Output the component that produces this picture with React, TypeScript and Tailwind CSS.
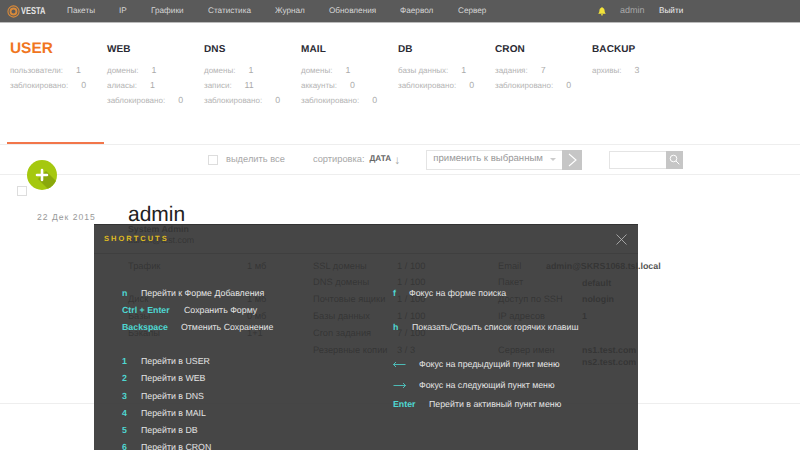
import React from "react";

const nav: [string, string][] = [
  ["Пакеты", "w-[52px]"],
  ["IP", "w-[32px]"],
  ["Графики", "w-[57px]"],
  ["Статистика", "w-[67px]"],
  ["Журнал", "w-[54px]"],
  ["Обновления", "w-[71px]"],
  ["Фаервол", "w-[58px]"],
  ["Сервер", "w-[50px]"],
];

const stats: { title: string; big?: boolean; rows: [string, string][] }[] = [
  { title: "USER", big: true, rows: [["пользователи:", "1"], ["заблокировано:", "0"]] },
  { title: "WEB", rows: [["домены:", "1"], ["алиасы:", "1"], ["заблокировано:", "0"]] },
  { title: "DNS", rows: [["домены:", "1"], ["записи:", "11"], ["заблокировано:", "0"]] },
  { title: "MAIL", rows: [["домены:", "1"], ["аккаунты:", "0"], ["заблокировано:", "0"]] },
  { title: "DB", rows: [["базы данных:", "1"], ["заблокировано:", "0"]] },
  { title: "CRON", rows: [["задания:", "7"], ["заблокировано:", "0"]] },
  { title: "BACKUP", rows: [["архивы:", "3"]] },
];

const under: string[][] = [
  ["Трафик", "1 мб", "SSL домены", "1 / 100", "Email", "admin@SKRS1068.tsl.local"],
  ["", "", "DNS домены", "1 / 100", "Пакет", "default"],
  ["Диск", "1 мб", "Почтовые ящики", "1 / 100", "Доступ по SSH", "nologin"],
  ["Базы", "0 мб", "Базы данных", "1 / 100", "IP адресов", "1"],
  ["Бэкапы", "1+1", "Cron задания", "7 / 100", "", ""],
  ["", "", "Резервные копии", "3 / 3", "Сервер имен", "ns1.test.com"],
];

function Key({ k, text, gap, mb = "mb-[4.2px]" }: { k: string; text: string; gap: string; mb?: string }) {
  return (
    <div className={`flex h-[13px] items-center whitespace-nowrap ${mb}`}>
      <span className={`font-bold text-[#4fd8d2] ${gap}`}>{k}</span>
      <span className="text-[#e4e4e4]">{text}</span>
    </div>
  );
}

function Arrow({ left }: { left?: boolean }) {
  return (
    <svg width="13" height="7" viewBox="0 0 13 7" fill="none" stroke="#4fd8d2" strokeWidth="0.8" className="mr-[13px]">
      {left ? <path d="M12.5 3.5H.5M3 1 .5 3.5 3 6" /> : <path d="M.5 3.5h12M10 1l2.5 2.5L10 6" />}
    </svg>
  );
}

export default function App() {
  return (
    <div className="relative h-[450px] w-[800px] overflow-hidden bg-white font-['Liberation_Sans',Arial,sans-serif] text-[8.8px] [text-rendering:geometricPrecision]">
      <header className="flex h-[22px] items-center bg-[#5a5a5a] text-[8.2px] text-[#d6d6d6] shadow-[0_1px_0_#bbb]">
        <svg width="13" height="13" viewBox="0 0 14 14" className="ml-[7px]" fill="none" stroke="#d98a3a">
          <circle cx="7" cy="7" r="6" strokeWidth="1.200" />
          <circle cx="7" cy="7" r="3.200" strokeWidth="2" />
        </svg>
        <span className="ml-[1px] w-[46px] origin-left scale-x-[0.75] text-[10px] font-bold text-[#e6e6e6]">VESTA</span>
        {nav.map(([n, w]) => (
          <span key={n} className={w}>{n}</span>
        ))}
        <svg width="8" height="9" viewBox="0 0 8 9" className="ml-[90px]" fill="#f3e33a">
          <path d="M4 0c.4 0 .6.3.6.7C6 1 6.600 2.200 6.600 3.600c0 1.600.4 2.300 1.200 3.100H.2C1 5.900 1.400 5.200 1.400 3.600 1.400 2.200 2 1 3.400.7 3.400.3 3.600 0 4 0ZM3 7.300h2C5 8.100 4.600 8.600 4 8.600S3 8.100 3 7.300Z" />
        </svg>
        <span className="ml-[14px] w-[39px] text-[9px] text-[#a8a8a8]">admin</span>
        <span className="text-[#f0f0f0]">Выйти</span>
      </header>

      <section className="flex h-[121px] pl-[10px] pt-[20px]">
        {stats.map((s) => (
          <div key={s.title} className="w-[97px] shrink-0">
            <div className={`flex h-[14px] items-center font-bold ${s.big ? "text-[15.400px] text-[#f0761f]" : "text-[10px] tracking-[0.1px] text-[#2a2a33]"}`}>
              {s.title}
            </div>
            <div className="mt-[9px] flex flex-col gap-[4px] text-[8px] text-[#b4b4b4]">
              {s.rows.map(([l, v]) => (
                <div key={l} className="flex h-[11px] items-center whitespace-nowrap">
                  <span>{l}</span>
                  <span className="ml-[13px] text-[8.800px] text-[#aaa]">{v}</span>
                </div>
              ))}
            </div>
          </div>
        ))}
      </section>

      <div className="flex h-[2px] items-end border-b border-[#eee] pl-[7px]">
        <div className="h-[2px] w-[97px] bg-[#f2764a]" />
      </div>

      <div className="flex h-[30px] items-center border-b border-[#eee] text-[#a8a8a8]">
        <span className="ml-[208px] size-[10px] border border-[#ddd]" />
        <span className="ml-[8px] text-[9.300px]">выделить все</span>
        <span className="ml-[28px] text-[9.300px]">сортировка:</span>
        <span className="ml-[5px] text-[8.200px] font-bold text-[#666]">ДАТА</span>
        <span className="ml-[3px] text-[12px]">↓</span>
        <div className="ml-[26px] flex h-[20px] w-[156px]">
          <div className="flex flex-1 items-center justify-between whitespace-nowrap border border-r-0 border-[#e4e4e4] px-[6px] text-[9.600px] text-[#999]">
            <span>применить к выбранным</span>
            <span className="h-0 w-0 border-x-[3px] border-t-[3px] border-x-transparent border-t-[#ccc]" />
          </div>
          <div className="flex w-[20px] items-center justify-center bg-[#c6c6c6]">
            <svg width="9" height="14" viewBox="0 0 9 14" fill="none" stroke="#fff" strokeWidth="1.100"><path d="m1 1 7 6-7 6" /></svg>
          </div>
        </div>
        <div className="ml-[27px] flex h-[18px] w-[74px]">
          <div className="flex-1 border border-r-0 border-[#e4e4e4]" />
          <div className="flex w-[17px] items-center justify-center bg-[#c6c6c6]">
            <svg width="11" height="11" viewBox="0 0 11 11" fill="none" stroke="#fff" strokeWidth="1"><circle cx="4.500" cy="4.500" r="3.300" /><path d="m7 7 3.300 3.300" /></svg>
          </div>
        </div>
      </div>

      <div className="relative flex h-[229px] border-b border-[#eee] text-[#555]">
        <div className="ml-[17px] mt-[11px] size-[10px] border border-[#ddd]" />
        <div className="ml-[10px] mt-[36px] w-[74px] whitespace-nowrap text-[8.600px] tracking-[1px] text-[#999]">22 Дек 2015</div>
        <div className="ml-[17px] mt-[28px] flex-1 whitespace-nowrap">
          <div className="text-[21px] leading-[24px] text-[#222]">admin</div>
          <div className="-mt-[4px] h-[11px] font-bold">System Admin</div>
          <div className="h-[11px]">admin@test.com</div>
          <div className="mt-[16px] flex flex-col gap-[5.800px] text-[9.300px]">
            {under.map((r, i) => (
              <div key={i} className="flex h-[11px] items-center">
                <span className="w-[119px]">{r[0]}</span>
                <span className="w-[66px]">{r[1]}</span>
                <span className="w-[84px]">{r[2]}</span>
                <span className="w-[101px]">{r[3]}</span>
                <span className={i === 0 ? "w-[48px]" : "w-[84px]"}>{r[4]}</span>
                <span className="text-[8.900px] font-bold text-[#555]">{r[5]}</span>
              </div>
            ))}
            <div className="-mt-[5.800px] h-[11px] pl-[454px] text-[8.900px] font-bold text-[#555]">ns2.test.com</div>
          </div>
        </div>
      </div>

      <div className="absolute left-[27px] top-[160px] flex size-[30px] items-center justify-center overflow-hidden rounded-full bg-[#a5c80f]">
        <svg width="30" height="30" viewBox="0 0 30 30" className="absolute inset-0">
          <path d="M19 11 30 22l-8 8-11-11Z" fill="#8aa80c" />
          <path d="M15 10v10M10 15h10" stroke="#fff" strokeWidth="2.600" strokeLinecap="round" />
        </svg>
      </div>

      <div className="absolute left-[94px] top-[224px] h-[226px] w-[544px] border-t border-[#333] bg-[#323232]/90">
        <div className="flex h-[29px] items-center justify-between border-b border-[#3f3f3f] pl-[10px] pr-[11px]">
          <span className="text-[7.500px] font-bold tracking-[2px] text-[#e0bd21]">SHORTCUTS</span>
          <svg width="11" height="11" viewBox="0 0 11 11" stroke="#bbb" strokeWidth="0.800"><path d="m.5.5 10 10M10.500.5l-10 10" /></svg>
        </div>
        <div className="flex pl-[28px] pt-[33px]">
          <div className="w-[271px]">
            <Key k="n" text="Перейти к Форме Добавления" gap="w-[19px]" />
            <Key k="Ctrl + Enter" text="Сохранить Форму" gap="w-[62px]" />
            <Key k="Backspace" text="Отменить Сохранение" gap="w-[59px]" mb="mb-[21px]" />
            {["USER", "WEB", "DNS", "MAIL", "DB", "CRON"].map((x, i) => (
              <Key key={x} k={String(i + 1)} text={`Перейти в ${x}`} gap="w-[19px]" />
            ))}
          </div>
          <div>
            <Key k="f" text="Фокус на форме поиска" gap="w-[16px]" mb="mb-[21px]" />
            <Key k="h" text="Показать/Скрыть список горячих клавиш" gap="w-[19px]" mb="mb-[24px]" />
            <div className="mb-[8px] flex h-[13px] items-center whitespace-nowrap text-[#e4e4e4]"><Arrow left /><span>Фокус на предыдущий пункт меню</span></div>
            <div className="mb-[6px] flex h-[13px] items-center whitespace-nowrap text-[#e4e4e4]"><Arrow /><span>Фокус на следующий пункт меню</span></div>
            <Key k="Enter" text="Перейти в активный пункт меню" gap="w-[36px]" />
          </div>
        </div>
      </div>
    </div>
  );
}
